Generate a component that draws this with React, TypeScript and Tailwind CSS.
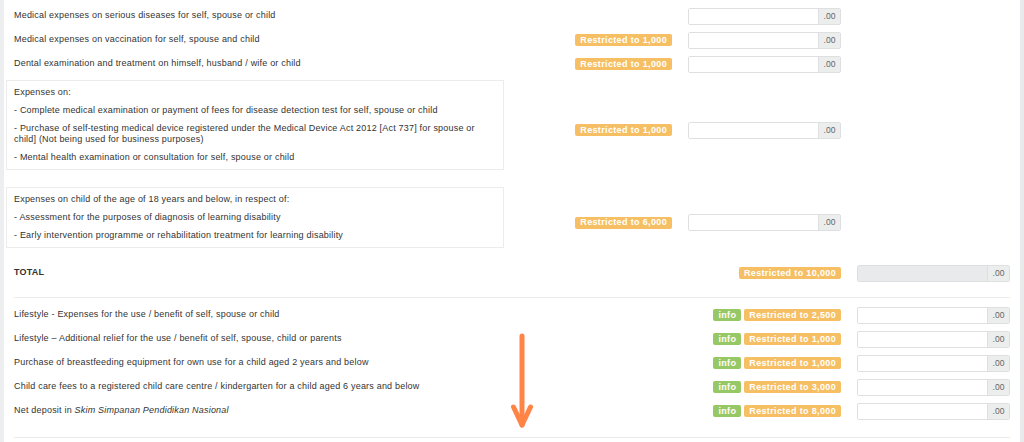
import { ReactNode } from 'react';

const font = { fontFamily: '"Liberation Sans", Arial, sans-serif' };

const Badge = ({ children, tone = 'warn' }: { children: ReactNode; tone?: 'warn' | 'info' }) => (
  <span
    className={`inline-flex h-[12px] items-center rounded-[2px] px-[5px] text-[9px] font-bold leading-none tracking-[0.35px] text-white ${
      tone === 'warn' ? 'bg-[#f6bf63]' : 'bg-[#97c866]'
    }`}
  >
    {children}
  </span>
);

const MoneyInput = ({ disabled = false }: { disabled?: boolean }) => (
  <div className="ml-[16px] flex h-[17px] w-[153px] shrink-0 overflow-hidden rounded-[2px] border border-[#dedfe1]">
    <div className={`flex-1 ${disabled ? 'bg-[#e9eaec]' : 'bg-white'}`} />
    <div className="flex w-[22px] items-center justify-center border-l border-[#dedfe1] bg-[#eceded] text-[8.5px] tracking-normal text-[#666]">
      .00
    </div>
  </div>
);

const topRows = [
  { label: 'Medical expenses on serious diseases for self, spouse or child', limit: '' },
  { label: 'Medical expenses on vaccination for self, spouse and child', limit: '1,000' },
  { label: 'Dental examination and treatment on himself, husband / wife or child', limit: '1,000' },
];

const boxes = [
  {
    limit: '1,000',
    lines: [
      'Expenses on:',
      '- Complete medical examination or payment of fees for disease detection test for self, spouse or child',
      '- Purchase of self-testing medical device registered under the Medical Device Act 2012 [Act 737] for spouse or child] (Not being used for business purposes)',
      '- Mental health examination or consultation for self, spouse or child',
    ],
  },
  {
    limit: '6,000',
    lines: [
      'Expenses on child of the age of 18 years and below, in respect of:',
      '- Assessment for the purposes of diagnosis of learning disability',
      '- Early intervention programme or rehabilitation treatment for learning disability',
    ],
  },
];

const lifestyle: { label: ReactNode; limit: string }[] = [
  { label: 'Lifestyle - Expenses for the use / benefit of self, spouse or child', limit: '2,500' },
  { label: 'Lifestyle – Additional relief for the use / benefit of self, spouse, child or parents', limit: '1,000' },
  { label: 'Purchase of breastfeeding equipment for own use for a child aged 2 years and below', limit: '1,000' },
  { label: 'Child care fees to a registered child care centre / kindergarten for a child aged 6 years and below', limit: '3,000' },
  {
    label: (
      <>
        Net deposit in <i>Skim Simpanan Pendidikan Nasional</i>
      </>
    ),
    limit: '8,000',
  },
];

export default function App() {
  return (
    <div
      className="relative flex h-[442px] w-[1024px] overflow-hidden bg-white text-[9px] tracking-[0.2px] text-[#333]"
      style={font}
    >
      <div className="w-[4px] shrink-0 bg-[#eceef0]" />

      <div className="flex-1">
        {/* medical section */}
        <div className="pl-[2px] pt-[4px]">
          {topRows.map((r) => (
            <div key={r.label} className="flex h-[24px] items-center">
              <div className="w-[498px] pl-[8px]">{r.label}</div>
              <div className="flex w-[168px] justify-end">{r.limit && <Badge>Restricted to {r.limit}</Badge>}</div>
              <MoneyInput />
            </div>
          ))}

          {boxes.map((b, i) => (
            <div key={b.limit} className={`flex items-center ${i === 0 ? 'mt-[4px]' : 'mt-[7px]'}`}>
              <div className="mb-[10px] flex w-[498px] flex-col gap-[7px] border border-[#ececec] px-[7px] py-[6px] leading-[11px]">
                {b.lines.map((l) => (
                  <p key={l}>{l}</p>
                ))}
              </div>
              <div className="flex w-[168px] justify-end">
                <Badge>Restricted to {b.limit}</Badge>
              </div>
              <MoneyInput />
            </div>
          ))}
        </div>

        {/* lifestyle section */}
        <div className="px-[10px] pt-[3px]">
          <div className="flex h-[24px] items-center">
            <div className="flex-1 font-bold">TOTAL</div>
            <Badge>Restricted to 10,000</Badge>
            <MoneyInput disabled />
          </div>

          <div className="mt-[12px] border-t border-[#ececec] pt-[5px]">
            {lifestyle.map((r, i) => (
              <div key={i} className="flex h-[24px] items-center">
                <div className="flex-1">{r.label}</div>
                <div className="flex gap-[3px]">
                  <Badge tone="info">info</Badge>
                  <Badge>Restricted to {r.limit}</Badge>
                </div>
                <MoneyInput />
              </div>
            ))}
          </div>

          <div className="mt-[14px] border-t border-[#ececec]" />
        </div>
      </div>

      <div className="w-[4px] shrink-0 bg-[#e8eaeb]" />

      <svg
        className="absolute left-[510px] top-[332px]"
        width="24"
        height="98"
        viewBox="0 0 24 98"
        fill="none"
        stroke="#ff8446"
        strokeWidth="5"
        strokeLinecap="round"
        strokeLinejoin="round"
      >
        <path d="M12 4 V93" />
        <path d="M3.5 75 L12 93 L20.5 75" />
      </svg>
    </div>
  );
}
